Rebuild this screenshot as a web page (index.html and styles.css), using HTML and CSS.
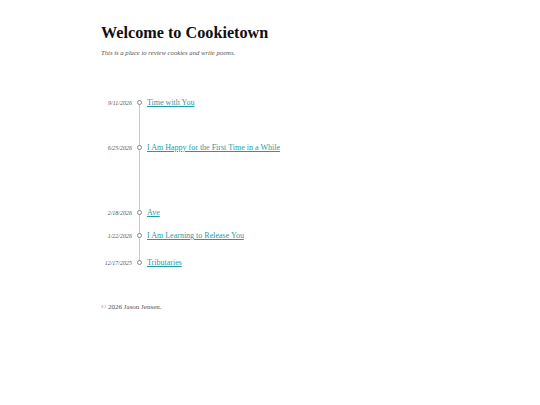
FILE: index.html
```html
<!DOCTYPE html>
<html>
<head>
<meta charset="utf-8">
<link rel="stylesheet" href="styles.css">
</head>
<body>
<main class="page">
  <h1 class="title">Welcome to Cookietown</h1>
  <p class="tagline">This is a place to review cookies and write poems.</p>
  <ul class="timeline">
    <li class="entry"><span class="date">9/11/2026</span><span class="dot"></span><a class="link" href="#">Time with You</a></li>
    <li class="entry" style="margin-top:34px"><span class="date">6/25/2026</span><span class="dot"></span><a class="link" href="#">I Am Happy for the First Time in a While</a></li>
    <li class="entry" style="margin-top:54px"><span class="date">2/18/2026</span><span class="dot"></span><a class="link" href="#">Ave</a></li>
    <li class="entry" style="margin-top:12px"><span class="date">1/22/2026</span><span class="dot"></span><a class="link" href="#">I Am Learning to Release You</a></li>
    <li class="entry" style="margin-top:16px"><span class="date">12/17/2025</span><span class="dot"></span><a class="link" href="#">Tributaries</a></li>
  </ul>
  <footer class="footer">© 2026 Jason Jensen.</footer>
</main>
</body>
</html>
```
FILE: styles.css
```css
html, body {
  margin: 0;
  padding: 0;
  background: #fff;
}
body {
  font-family: "Liberation Serif", Georgia, serif;
  color: #111;
}
.page {
  padding: 22px 0 0 101px;
}
.title {
  font-size: 16.2px;
  font-weight: bold;
  margin: 0;
  line-height: 22px;
}
.tagline {
  margin: 4px 0 0;
  font-size: 6.7px;
  font-style: italic;
  color: #555;
  line-height: 10px;
}
.timeline {
  list-style: none;
  margin: 39px 0 0;
  padding: 0;
  position: relative;
}
.timeline::before {
  content: "";
  position: absolute;
  left: 38px;
  top: 6px;
  bottom: 6px;
  width: 1px;
  background: #c8c8c8;
}
.entry {
  display: flex;
  align-items: center;
  height: 11px;
}
.date {
  width: 31px;
  text-align: right;
  font-size: 6px;
  font-style: italic;
  color: #555;
}
.dot {
  position: relative;
  box-sizing: border-box;
  width: 5px;
  height: 5px;
  border: 1px solid #888;
  border-radius: 50%;
  background: #fff;
  margin: 0 5px 0 5px;
}
.link {
  font-size: 8px;
  color: #1f9ba6;
  text-decoration: underline;
}
.footer {
  margin-top: 35px;
  font-size: 7px;
  color: #555;
}
```
